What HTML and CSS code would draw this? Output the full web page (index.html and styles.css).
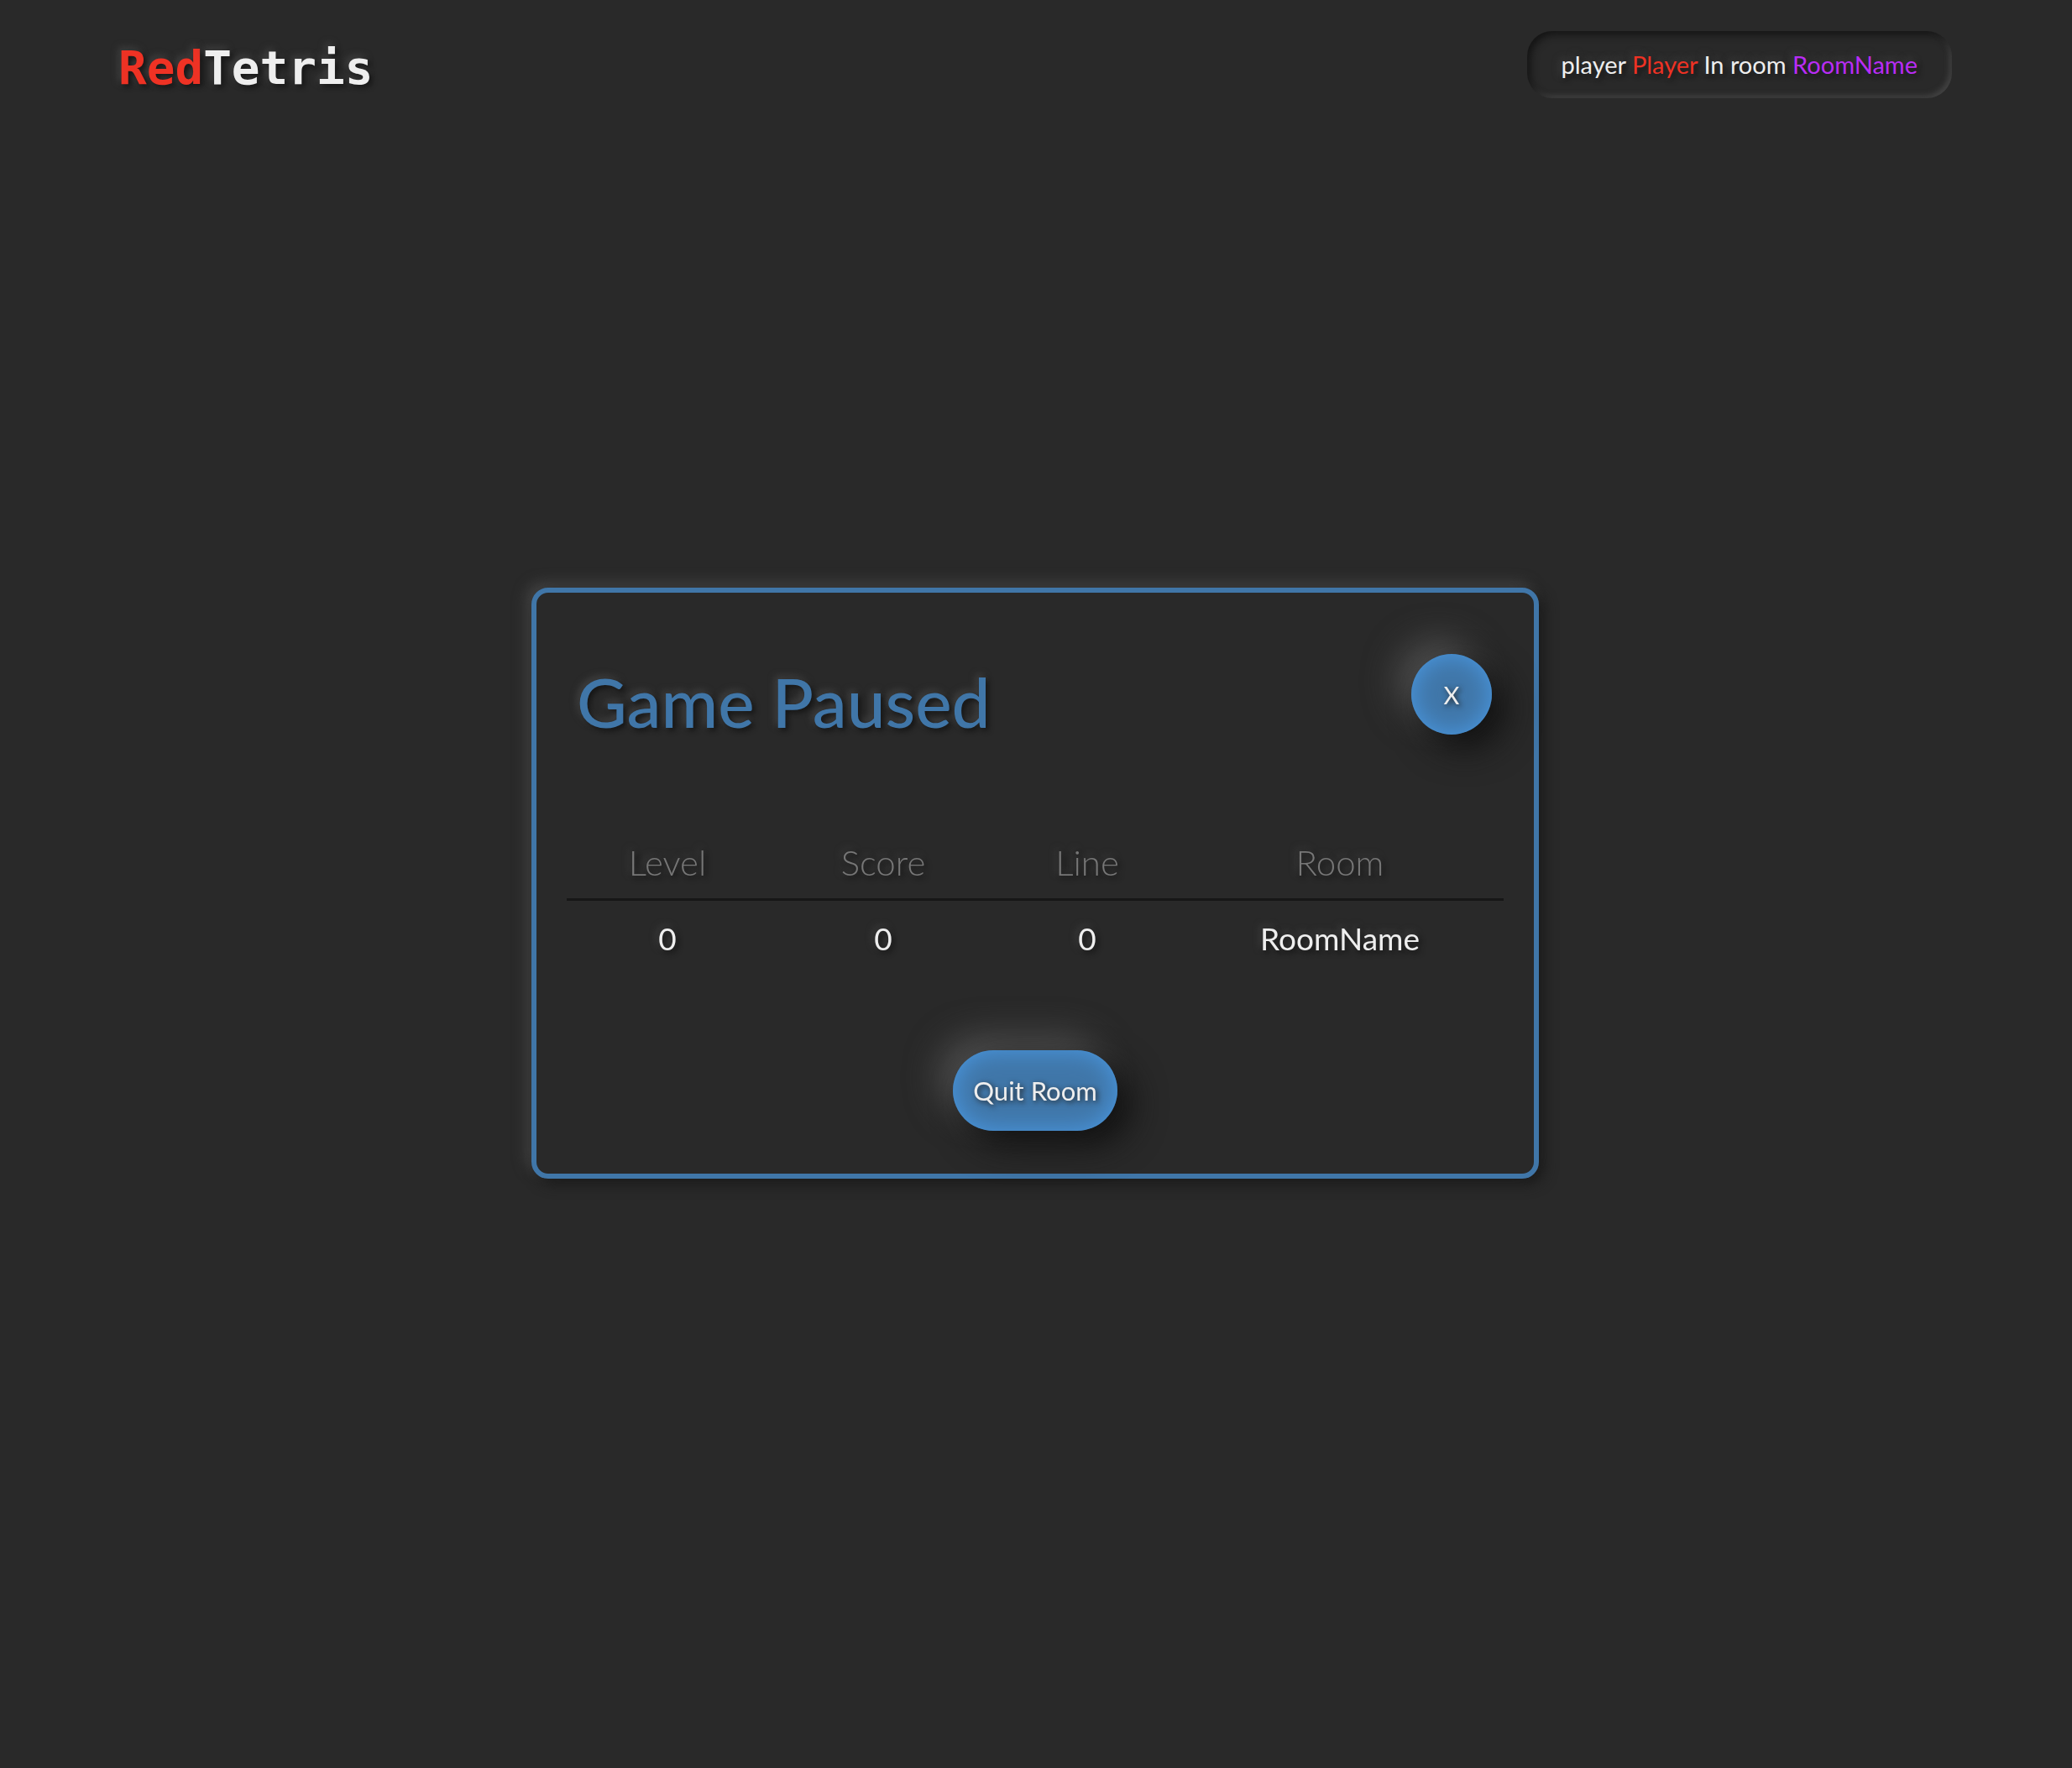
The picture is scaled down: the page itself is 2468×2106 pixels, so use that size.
FILE: index.html
```html
<!DOCTYPE html>
<html lang="en">
<head>
<meta charset="utf-8">
<meta name="viewport" content="width=device-width, initial-scale=1">
<title>RedTetris</title>
<link rel="stylesheet" href="styles.css">
</head>
<body>
<header class="header">
  <h1 class="logo"><span class="red">Red</span>Tetris</h1>
  <p class="status">player <span class="red">Player</span> In room <span class="purple">RoomName</span></p>
</header>
<main class="overlay">
  <section class="modal" role="dialog" aria-labelledby="modal-title">
    <div class="modal-head">
      <h2 class="modal-title" id="modal-title">Game Paused</h2>
      <button class="button button-close" type="button">X</button>
    </div>
    <table class="stats">
      <colgroup><col class="col-level"><col class="col-score"><col class="col-line"><col class="col-room"></colgroup>
      <thead>
        <tr><th scope="col">Level</th><th scope="col">Score</th><th scope="col">Line</th><th scope="col">Room</th></tr>
      </thead>
      <tbody>
        <tr><td>0</td><td>0</td><td>0</td><td>RoomName</td></tr>
      </tbody>
    </table>
    <button class="button" type="button">Quit Room</button>
  </section>
</main>
</body>
</html>
```
FILE: styles.css
```css
* {
  box-sizing: border-box;
  margin: 0;
}

body {
  min-height: 100vh;
  display: flex;
  flex-direction: column;
  background: #292929;
  color: #eee;
  font-family: Lato, sans-serif;
  font-size: 29px;
  text-shadow: 3px 3px 6px #141414, -3px -3px 8px #444;
}

.header {
  display: flex;
  align-items: flex-start;
  justify-content: space-between;
  padding: 37px 143px 0 141px;
}

.logo {
  font: bold 56px/88px "DejaVu Sans Mono", monospace;
}

.red {
  color: #ee3224;
}

.purple {
  color: #b92cf5;
}

.status {
  padding: 0 41px;
  border-radius: 30px;
  line-height: 80px;
  box-shadow: inset 4px 4px 10px #141414, inset -3px -3px 6px #484848;
}

.overlay {
  position: fixed;
  inset: 0;
  display: grid;
  place-items: center;
  padding: 0 2px 2px 0;
  pointer-events: none;
}

.modal {
  width: 1200px;
  max-width: 100%;
  display: flex;
  flex-direction: column;
  align-items: center;
  padding: 73px 36px 51px;
  border: 6px solid #4076a8;
  border-radius: 20px;
  box-shadow: 6px 6px 16px #1a1a1a, -6px -6px 16px #444;
  pointer-events: auto;
}

.modal-head {
  align-self: stretch;
  display: flex;
  align-items: flex-start;
  justify-content: space-between;
  padding: 0 14px 0 12px;
}

.modal-title {
  color: #4076a8;
  font-size: 82px;
  font-weight: 500;
  line-height: 112px;
}

.button {
  height: 96px;
  padding: 0 24px;
  border: 0;
  border-radius: 48px;
  background: #4076a8;
  color: #eee;
  font: 31px Lato, sans-serif;
  text-shadow: 2px 2px 6px #222;
  box-shadow: inset 0 0 30px #4a9ae4, 16px 16px 40px #111, -16px -16px 40px #505050;
  cursor: pointer;
}

.button-close {
  width: 96px;
  padding: 0;
  font-size: 29px;
}

.stats {
  width: 100%;
  margin: 90px 0 88px;
  border-collapse: collapse;
  table-layout: fixed;
  text-align: center;
}

.col-level {
  width: 240px;
}

.col-score {
  width: 274px;
}

.col-line {
  width: 212px;
}

.stats th {
  padding: 16px 0 13px;
  border-bottom: 3px solid #171717;
  color: #777;
  font-size: 42px;
  font-weight: 300;
  line-height: 60px;
}

.stats td {
  padding: 16px 0;
  font-size: 37px;
  line-height: 58px;
}
```
